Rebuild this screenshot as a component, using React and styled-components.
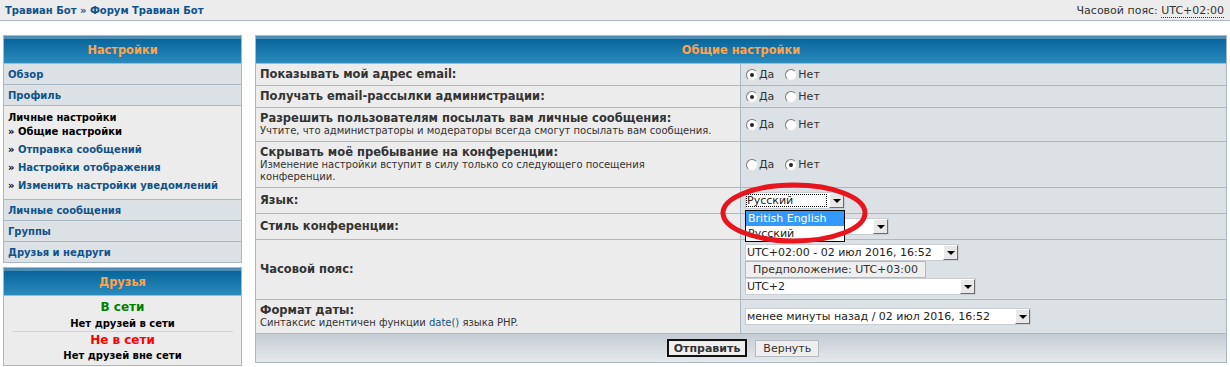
import React from 'react';
import styled, { createGlobalStyle } from 'styled-components';

const GlobalStyle = createGlobalStyle`
  body {
    margin: 0;
    background: #fff;
    font-family: "DejaVu Sans", Verdana, sans-serif;
    color: #333;
  }
`;

const Page = styled.div`
  width: 1230px;
`;

const TopBar = styled.div`
  display: flex;
  justify-content: space-between;
  align-items: center;
  height: 20px;
  padding: 0 6px 0 5px;
  background: #ececec;
  border-bottom: 1px solid #a9b8c2;
`;

const Crumbs = styled.div`
  font-size: 10px;
  font-weight: bold;
  color: #105289;
`;

const TimeInfo = styled.div`
  font-size: 11px;
  color: #333;

  abbr {
    text-decoration: none;
    border-bottom: 1px dotted #333;
  }
`;

const Columns = styled.div`
  display: flex;
  align-items: flex-start;
  gap: 13px;
  padding: 14px 3px 0;
`;

const Sidebar = styled.div`
  display: flex;
  flex-direction: column;
  gap: 4px;
  width: 239px;
  flex: none;
`;

const Panel = styled.div`
  border: 1px solid #a9b8c2;
  background: #ececec;
  box-sizing: border-box;
`;

const MainPanel = styled(Panel)`
  width: 972px;
  flex: none;
`;

const Header = styled.div`
  display: flex;
  align-items: center;
  justify-content: center;
  height: 27px;
  background: linear-gradient(#4d8db3 0, #4d8db3 3px, #07659b 3px, #2a8abc 100%);
  color: #ffa34f;
  font-size: 11.4px;
  font-weight: bold;
  border-bottom: 1px solid #a9b8c2;
`;

const MenuItem = styled.div`
  display: flex;
  align-items: center;
  height: 20px;
  padding-left: 4px;
  background: #dce1e5;
  border-bottom: 1px solid #a9b8c2;
  font-size: 10px;
  font-weight: bold;
  color: #105289;

  &:last-child {
    border-bottom: none;
  }
`;

const MenuGroup = styled.div`
  padding: 5px 4px 4px;
  background: #ececec;
  border-bottom: 1px solid #a9b8c2;
  font-size: 10px;
  font-weight: bold;
`;

const GroupTitle = styled.div`
  line-height: 14px;
  color: #000;
  margin-bottom: -2px;
`;

const SubItem = styled.div`
  line-height: 18px;
  color: ${p => (p.$active ? '#000' : '#105289')};
  white-space: nowrap;

  &::before {
    content: '» ';
    color: #000;
  }
`;

const Friends = styled.div`
  display: flex;
  flex-direction: column;
  align-items: center;
  padding: 4px 4px 2px;
`;

const FriendStatus = styled.div`
  font-size: 12px;
  font-weight: bold;
  line-height: 14px;
  margin-top: ${p => p.$mt || 0}px;
  color: ${p => p.$color};
`;

const FriendNote = styled.div`
  font-size: 10px;
  font-weight: bold;
  line-height: 14px;
  margin-top: ${p => p.$mt}px;
  color: #000;
`;

const FriendSep = styled.div`
  align-self: stretch;
  margin: 0 4px;
  border-top: 1px solid #cdd3d8;
`;

const Row = styled.div`
  display: grid;
  grid-template-columns: 485px 1fr;
  height: ${p => p.$h}px;
  border-bottom: 1px solid #a9b8c2;
`;

const LabelCell = styled.div`
  display: flex;
  flex-direction: column;
  justify-content: center;
  padding-left: 4px;
  background: #ececec;
  border-right: 1px solid #a9b8c2;
`;

const Label = styled.div`
  font-size: 11.5px;
  font-weight: bold;
  line-height: 13px;
  color: #333;
`;

const Explain = styled.div`
  font-size: 10px;
  line-height: 12px;
  color: #333;
  white-space: nowrap;

  a {
    color: #105289;
    text-decoration: none;
  }
`;

const ValueCell = styled.div`
  position: relative;
  display: flex;
  flex-direction: column;
  justify-content: center;
  align-items: flex-start;
  padding-left: 4px;
  background: #dce1e5;
`;

const Radios = styled.div`
  display: flex;
  align-items: center;
  font-size: 11px;
  color: #333;
`;

const RadioOption = styled.label`
  display: flex;
  align-items: center;
  margin-right: 10px;
  margin-left: 1px;
`;

const RadioDot = styled.span`
  display: flex;
  align-items: center;
  justify-content: center;
  width: 12px;
  height: 12px;
  box-sizing: border-box;
  margin-right: 1px;
  border-radius: 50%;
  background: #fff;
  border: 1px solid;
  border-color: #7a7a7a #e4e4e4 #e4e4e4 #7a7a7a;

  &::after {
    content: '';
    width: 4px;
    height: 4px;
    border-radius: 50%;
    background: ${p => (p.$checked ? '#222' : 'transparent')};
  }
`;

const Select = styled.div`
  display: flex;
  align-items: center;
  width: ${p => p.$w}px;
  height: 17px;
  box-sizing: border-box;
  background: #fff;
  border: 1px solid #c8ced3;
  font-size: 11px;
  color: #222;
`;

const SelectText = styled.span`
  flex: 1;
  padding-left: 1px;
  white-space: nowrap;
  overflow: hidden;

  ${p => p.$focused && `
    flex: none;
    width: 80px;
    outline: 1px dotted #000;
    outline-offset: -1px;
  `}
`;

const FocusGap = styled.span`
  flex: 1;
`;

const Arrow = styled.span`
  display: flex;
  align-items: center;
  justify-content: center;
  width: 15px;
  height: 15px;
  box-sizing: border-box;
  background: #e8e8e8;
  border: 1px solid;
  border-color: #fff #6d6d6d #6d6d6d #fff;

  &::after {
    content: '';
    border-left: 4px solid transparent;
    border-right: 4px solid transparent;
    border-top: 4px solid #000;
  }
`;

const ListBox = styled.div`
  position: absolute;
  left: 4px;
  top: 22px;
  z-index: 5;
  width: 100px;
  box-sizing: border-box;
  background: #fff;
  border: 1px solid #000;
  font-size: 11px;
`;

const ListOption = styled.div`
  height: 15px;
  line-height: 15px;
  padding-left: 2px;
  background: ${p => (p.$hl ? '#3399ff' : '#fff')};
  color: ${p => (p.$hl ? '#fff' : '#222')};
`;

const Annotation = styled.svg`
  position: absolute;
  left: -23px;
  top: -8px;
  z-index: 6;
  pointer-events: none;
`;

const Button = styled.button`
  height: ${p => (p.$primary ? 18 : 17)}px;
  padding: 0 ${p => (p.$primary ? 5 : 7)}px;
  font-family: inherit;
  font-size: 11px;
  font-weight: ${p => (p.$primary ? 'bold' : 'normal')};
  color: #333;
  background: #efefef;
  border: ${p => (p.$primary ? '2px solid #111' : '1px solid #b3bac1')};
  cursor: pointer;
`;

const Footer = styled.div`
  display: flex;
  align-items: center;
  justify-content: center;
  gap: 8px;
  height: 28px;
  padding-left: 4px;
  background: linear-gradient(#c4ccd3, #e5e9ec);
`;

const TzStack = styled.div`
  display: flex;
  flex-direction: column;
  align-items: flex-start;
`;

function Radio({ yes }) {
  return (
    <Radios>
      <RadioOption><RadioDot $checked={yes} />Да</RadioOption>
      <RadioOption><RadioDot $checked={!yes} />Нет</RadioOption>
    </Radios>
  );
}

function FakeSelect({ w, children, focused }) {
  return (
    <Select $w={w}>
      <SelectText $focused={focused}>{children}</SelectText>
      {focused && <FocusGap />}
      <Arrow />
    </Select>
  );
}

const menuTop = ['Обзор', 'Профиль'];
const menuBottom = ['Личные сообщения', 'Группы', 'Друзья и недруги'];
const subItems = ['Отправка сообщений', 'Настройки отображения', 'Изменить настройки уведомлений'];

export default function App() {
  return (
    <Page>
      <GlobalStyle />
      <TopBar>
        <Crumbs>Травиан Бот » Форум Травиан Бот</Crumbs>
        <TimeInfo>Часовой пояс: <abbr>UTC+02:00</abbr></TimeInfo>
      </TopBar>

      <Columns>
        <Sidebar>
          <Panel>
            <Header>Настройки</Header>
            {menuTop.map(m => <MenuItem key={m}>{m}</MenuItem>)}
            <MenuGroup>
              <GroupTitle>Личные настройки</GroupTitle>
              <SubItem $active>Общие настройки</SubItem>
              {subItems.map(s => <SubItem key={s}>{s}</SubItem>)}
            </MenuGroup>
            {menuBottom.map(m => <MenuItem key={m}>{m}</MenuItem>)}
          </Panel>

          <Panel>
            <Header>Друзья</Header>
            <Friends>
              <FriendStatus $color="#008000">В сети</FriendStatus>
              <FriendNote $mt={3}>Нет друзей в сети</FriendNote>
              <FriendSep />
              <FriendStatus $color="#ff0000" $mt={1}>Не в сети</FriendStatus>
              <FriendNote $mt={2}>Нет друзей вне сети</FriendNote>
            </Friends>
          </Panel>
        </Sidebar>

        <MainPanel>
          <Header>Общие настройки</Header>

          <Row $h={21}>
            <LabelCell><Label>Показывать мой адрес email:</Label></LabelCell>
            <ValueCell><Radio yes /></ValueCell>
          </Row>
          <Row $h={21}>
            <LabelCell><Label>Получать email-рассылки администрации:</Label></LabelCell>
            <ValueCell><Radio yes /></ValueCell>
          </Row>
          <Row $h={33}>
            <LabelCell>
              <Label>Разрешить пользователям посылать вам личные сообщения:</Label>
              <Explain>Учтите, что администраторы и модераторы всегда смогут посылать вам сообщения.</Explain>
            </LabelCell>
            <ValueCell><Radio yes /></ValueCell>
          </Row>
          <Row $h={45}>
            <LabelCell>
              <Label>Скрывать моё пребывание на конференции:</Label>
              <Explain>Изменение настройки вступит в силу только со следующего посещения<br />конференции.</Explain>
            </LabelCell>
            <ValueCell><Radio /></ValueCell>
          </Row>
          <Row $h={25}>
            <LabelCell><Label>Язык:</Label></LabelCell>
            <ValueCell>
              <FakeSelect w={100} focused>Русский</FakeSelect>
              <ListBox>
                <ListOption $hl>British English</ListOption>
                <ListOption>Русский</ListOption>
              </ListBox>
              <Annotation width="152" height="66" viewBox="0 0 152 66">
                <ellipse cx="76" cy="33" rx="71" ry="28" fill="none" stroke="#e8141e" strokeWidth="5" />
              </Annotation>
            </ValueCell>
          </Row>
          <Row $h={25}>
            <LabelCell><Label>Стиль конференции:</Label></LabelCell>
            <ValueCell><FakeSelect w={144} /></ValueCell>
          </Row>
          <Row $h={59}>
            <LabelCell><Label>Часовой пояс:</Label></LabelCell>
            <ValueCell>
              <TzStack>
                <FakeSelect w={214}>UTC+02:00 - 02 июл 2016, 16:52</FakeSelect>
                <Button type="button">Предположение: UTC+03:00</Button>
                <FakeSelect w={231}>UTC+2</FakeSelect>
              </TzStack>
            </ValueCell>
          </Row>
          <Row $h={33}>
            <LabelCell>
              <Label>Формат даты:</Label>
              <Explain>Синтаксис идентичен функции <a href="#date">date()</a> языка PHP.</Explain>
            </LabelCell>
            <ValueCell><FakeSelect w={286}>менее минуты назад / 02 июл 2016, 16:52</FakeSelect></ValueCell>
          </Row>

          <Footer>
            <Button type="button" $primary>Отправить</Button>
            <Button type="button">Вернуть</Button>
          </Footer>
        </MainPanel>
      </Columns>
    </Page>
  );
}
